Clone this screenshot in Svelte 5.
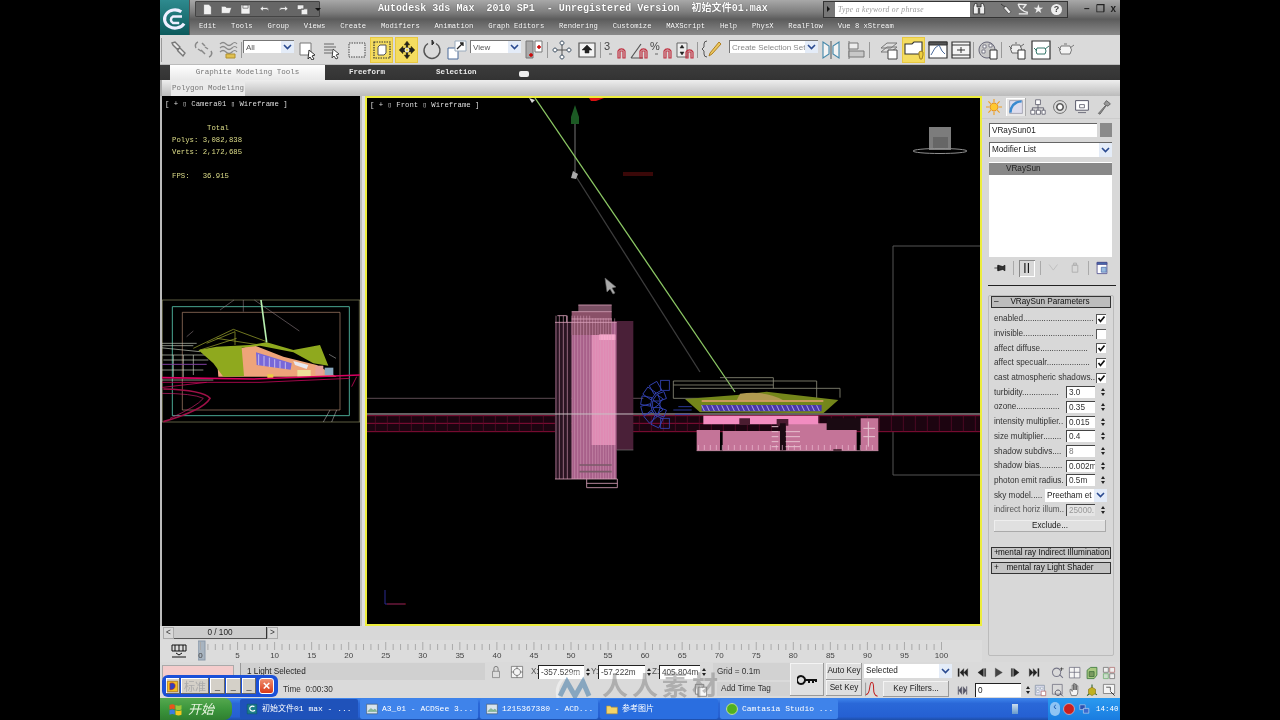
<script>
  const icons = {
    chain: [['M4 3l3-1 5 5-2 3-5-5zM9 9l3-1 5 5-2 3-5-5z', '#777', '#e8e8e8', 1.4]],
    chain2: [['M5 2a4 4 0 0 0-2 6M9 3l3 3M8 10l4 4M16 17a4 4 0 0 0 2-6M5 9l3 2M12 7l3 2', '#888', 'none', 1.5]],
    wave: [['M2 4q3-3 6 0t6 0 5 0M2 8q3-3 6 0t6 0 5 0M2 12q3-3 6 0t6 0 5 0', '#8a8a8a', 'none', 1.2], ['M8 14h9v4H8z', '#b09030', '#e0c050', 1]],
    sel: [['M3 3h11v12H3z', '#777', '#fff', 1], ['M12 10l6 5-3 1 2 3-2 1-2-3-2 2z', '#333', '#fff', 1]],
    selname: [['M2 4h10M2 7h12M2 10h8M2 13h9', '#666', 'none', 1.2], ['M11 9l6 5-3 1 2 3-2 1-2-3-2 2z', '#444', '#fff', 1]],
    region: [['M2 3h16v14H2z', '#444', '#e4e4e4', 1, '1.5 1']],
    win: [['M2 2h16v16H2z', '#333', 'none', 1.2, '1.5 1'], ['M6 7l2-2h6v8l-2 2H6z', '#555', '#fff', 1]],
    move: [['M10 1l3 4h-2v3h3V6l4 4-4 4v-2h-3v3h2l-3 4-3-4h2v-3H6v2l-4-4 4-4v2h3V5H7z', '#6a5a00', '#222', .4], ['M10 8a2 2 0 1 1 0 4 2 2 0 0 1 0-4z', '#fff', '#f4dc48', 1]],
    rot: [['M14 3.500a8 8 0 1 1-8 0', '#555', 'none', 1.4], ['M10 0l2 3-2 2z', '#333', '#333', 1]],
    scale: [['M1 8h10v11H1z', '#4a6a9a', '#fff', 1], ['M8 1h11v10H8z', '#9ab', '#fff', 1], ['M10 9l6-6M13 3h3v3', '#222', 'none', 1.3]],
    pivot: [['M2 1h7v17H2z', '#777', '#aaa', 1], ['M11 1h7v11h-7z', '#777', '#fff', 1], ['M5 15h4M7 13v4M13 7h4M15 5v4', '#c00', 'none', 1.4]],
    manip: [['M10 3v14M3 10h14', '#555', 'none', 1], ['M10 1a2 2 0 1 1-.01 0zM10 15a2 2 0 1 1-.01 0zM3 8a2 2 0 1 1-.01 0zM17 8a2 2 0 1 1-.01 0z', '#456', '#fff', 1]],
    kbd: [['M2 3h16v14H2z', '#555', '#f4f4f4', 1.2], ['M10 5l5 5h-3v3H8v-3H5z', '#222', '#222', .5]],
    snap3: [['M12 11a4 4 0 0 1 7 0v7h-2v-7h-3v7h-2z', '#c03040', 'none', 1.2], ['M3 14h3', '#666', 'none', 1]],
    angle: [['M2 18l10-14M2 18h12', '#555', 'none', 1.2], ['M11 11a4 4 0 0 1 7 0v7h-2v-7h-3v7h-2z', '#c03040', 'none', 1.2]],
    spin: [['M2 3h10v14H2z', '#666', '#eee', 1], ['M7 5l2 3H5zM7 15l2-3H5z', '#222', '#222', .5], ['M11 12a4 4 0 0 1 7 0v6h-2v-6h-3v6h-2z', '#c03040', 'none', 1.2]],
    named: [['M5 1q-3 0-3 3v3l-2 2 2 2v3q0 3 3 3', '#555', 'none', 1], ['M8 13l9-11 2 2-9 10-3 2z', '#b08020', '#ecc860', 1]],
    mirror: [['M2 2v16l6-4V6zM18 2v16l-6-4V6z', '#48a', '#f4f4f4', 1.1], ['M10 1v18', '#555', 'none', 1]],
    align: [['M3 1v18', '#777', 'none', 1], ['M3 3h9v6H3z', '#777', '#eee', 1], ['M3 11h15v6H3z', '#777', '#c8c8c8', 1]],
    layer: [['M2 8l6-5h10l-6 5zM2 12l6-5h10l-6 5z', '#777', '#ddd', 1], ['M9 10h9v9H9z', '#444', '#fff', 1]],
    graph: [['M1 4h7l2-2h8v12H1z', '#333', '#fff', 1.1], ['M15 12a3 3 0 0 1 4 0v3l-1 4h-2l-1-4z', '#a08020', '#f0d040', 1]],
    curve: [['M1 2h18v16H1z', '#333', '#fff', 1.2], ['M1 2h18v3H1z', '#333', '#555', 1], ['M3 15l4-7 4-3 3 6 3 3', '#4a6a9a', 'none', 1]],
    schem: [['M1 2h18v16H1z', '#333', '#f4f4f4', 1.2], ['M1 5h18M1 15h18M6 10h8M10 7v6', '#333', 'none', 1]],
    mat: [['M9 2a8 8 0 1 1-.01 0z', '#667', '#c8c8c8', 1], ['M5 5h3v3H5zM11 4h3v3h-3zM4 10h3v3H4z', '#667', '#fff', .8], ['M12 10h7v9h-7z', '#333', '#fff', 1]],
    teaS: [['M6 5h8q3 4 0 8H6q-3-4 0-8zM3 6l3 3M14 7l4-3M9 3h2', '#666', '#eee', 1], ['M12 10h7v9h-7z', '#333', '#fff', 1]],
    teaB: [['M1 1h18v18H1z', '#333', '#fff', 1.2], ['M6 8h8q2 3 0 6H6q-2-3 0-6zM3 8l3 3M14 9l4-3', '#35776a', 'none', 1]],
    tea: [['M5 6h9q3 4 0 8H5q-3-4 0-8zM2 7l3 3M14 8l4-3M8 4h3', '#777', '#f4f4f4', 1]],
    sun: [['M10 5a5 5 0 1 1-.01 0z', '#e08010', '#ffc830', 1], ['M10 0v4M10 16v4M0 10h4M16 10h4M3 3l3 3M17 3l-3 3M3 17l3-3M17 17l-3-3', '#f0a020', 'none', 1.4]],
    modify: [['M2 2h16v16H2z', '#99a', '#dde', 1], ['M3 17q1-13 14-14', '#3a8ad0', 'none', 3]],
    hier: [['M7 1h6v6H7zM1 14h5v5H1zM8 14h5v5H8zM15 14h4v5h-4z', '#556', '#fff', 1], ['M10 7v4M3 14v-3h14v3M10 11v3', '#556', 'none', 1]],
    motion: [['M10 2a8 8 0 1 1-.01 0z', '#555', '#ddd', 1], ['M10 6a4 4 0 1 1-.01 0z', '#555', '#fff', 2]],
    disp: [['M2 2h16v12H2z', '#556', '#fff', 1.2], ['M7 7h6v4H7zM5 17h10', '#556', 'none', 1]],
    util: [['M3 18l9-10-2-2 3-4 5 4-3 3-2-1-8 11z', '#555', '#999', 1]],
    pin: [['M2 10h5M7 6v8M7 6l7 2 3-2v8l-3-2-7 2z', '#111', '#333', 1]],
    bars: [['M7 3v14M12 3v14', '#111', 'none', 1.6]],
    ghost1: [['M3 5l6 8M15 5l-6 8', '#bbb', 'none', 1.2]],
    ghost2: [['M6 6h8v10H6zM8 3h4v3H8z', '#aaa', 'none', 1.2]],
    conf: [['M3 2h14v16H3z', '#448', '#fff', 1.1], ['M3 2h14v3H3z', '#448', '#46a', 1], ['M9 9h7v7H9z', '#46a', '#9bd', 1]],
    lock: [['M5 9h10v9H5z', '#777', '#ddd', 1], ['M7 9V5a3 3 0 0 1 6 0v4', '#777', 'none', 1.3]],
    abs: [['M2 2h16v16H2z', '#666', '#f4f4f4', 1], ['M10 5a5 5 0 1 1-.01 0zM10 2v3M10 15v3M2 10h3M15 10h3', '#555', 'none', 1]],
    keyb: [['M4 6a4 4 0 1 1-.01 0zM8 10h11v2M12 10v3M16 10v3', '#111', 'none', 2]],
    kcurve: [['M2 17q4 0 5-8t3-7q2 0 2 8t5 9', '#c02020', 'none', 1.3], ['M2 19V2', '#888', 'none', 1]],
    first: [['M3 4v12h2V4zM12 4l-6 6 6 6zM18 4l-6 6 6 6z', '#222', '#222', .4]],
    prev: [['M14 4l-8 6 8 6zM15 4h1v12h-1zM17 4h1v12h-1z', '#222', '#222', .4]],
    play: [['M5 3l11 7-11 7z', '#444', '#444', .4]],
    next: [['M6 4l8 6-8 6zM4 4h1v12H4zM2 4h1v12H2z', '#222', '#222', .4]],
    last: [['M17 4v12h-2V4zM8 4l6 6-6 6zM2 4l6 6-6 6z', '#222', '#222', .4]],
    modek: [['M3 4v12h1V4zM9 4l-5 6 5 6zM17 4v12h-1V4zM11 4l5 6-5 6z', '#556', '#556', .4]],
    time: [['M2 2h14v15H2z', '#789', '#dde', 1], ['M4 5h4v3H4zM10 5h4v3h-4zM4 10h4v3H4z', '#89a', '#fff', .8], ['M11 11h7v7h-7z', '#a55', '#fff', 1]],
    zoom: [['M8 3a6 6 0 1 1-.01 0zM12 12l5 5', '#778', 'none', 1.5], ['M15 2v5M13 4h5', '#333', 'none', 1]],
    zoomall: [['M2 2h15v15H2zM2 9h15M9 2v15', '#667', '#f4f4f4', 1]],
    tag: [['M2 2h12v14H2z', '#666', '#eee', 1], ['M6 6h12v13H6z', '#666', '#f8f8f8', 1]],
    cube: [['M3 6l5-4h9v11l-4 5H3z', '#3a7a3a', '#a8c880', 1.2], ['M6 8h7v7H6z', '#363', '#7a9a60', 1]],
    quad: [['M2 2h7v7H2z', '#666', '#eee', 1], ['M11 2h7v7h-7z', '#a66', '#eee', 1], ['M2 11h7v7H2z', '#6a6', '#cdc', 1], ['M11 11h7v7h-7z', '#666', '#eee', 1]],
    reg: [['M2 2h14v14H2z', '#667', 'none', 1], ['M10 10a4 4 0 1 1-.01 0zM13 15l4 4', '#556', 'none', 1.3]],
    hand: [['M5 18q-3-6-2-9 2-1 3 3V3h2v7V1h2v9V2h2v8V4h2v9q0 3-2 5z', '#555', '#f4f4f4', 1]],
    orbit: [['M10 2v14M10 12L3 18M10 12l7 5', '#286028', 'none', 1.5], ['M10 6l5 3v6l-5 3-5-3V9z', '#8a7a20', '#c0b020', 1]],
    maxi: [['M2 2h16v13H2z', '#666', '#f4f4f4', 1], ['M6 6h6v5', '#444', 'none', 1.2], ['M12 12l6 6', '#333', 'none', 1.4]],
    binoc: [['M2 8l2-6h3v5h6V2h3l2 6v9h-7V9H9v8H2z', '#222', '#eee', 1]],
    wrench: [['M3 3l4 4 3-1 7 8-3 3-7-8 1-3z', '#333', '#eee', 1]],
    dish: [['M3 3q3 10 14 12M3 3l12 1M4 17h13M10 9l5-6', '#eee', 'none', 2]],
    folder: [['M1 5h6l2 2h10v11H1z', '#b89030', '#f4d468', 1]],
    acdsee: [['M1 2h18v16H1z', '#456', '#d8e4ee', 1], ['M3 14l5-5 4 3 3-2 3 4z', '#486', '#8b9', .6]],
    globe: [['M10 1a9 9 0 1 1-.01 0z', '#d8f0a0', '#50b020', 1.4]],
    rball: [['M10 1a9 9 0 1 1-.01 0z', '#f0c0c0', '#c82020', 1.2]],
    net: [['M3 3h9v8H3z', '#cde', '#2a50b0', 1], ['M9 9h9v8H9z', '#cde', '#3a6ad0', 1]],
    imeico: [['M2 2h16v16H2z', '#a06010', '#f0c020', 1], ['M6 5q8-2 8 4t-8 6z', '#c02020', '#3040c0', 1]],
    maxapp: [['M2 2h16v16H2z', '#0e5a66', '#1c7f88', 1], ['M14 6a5 4 0 1 0 1 6', '#fff', 'none', 2]],
    maxlogo: [['M14.500 5.500a7.500 6.500 0 1 0 2 8.500', '#eef', 'none', 2.2], ['M15 9H8.500a2.500 2.500 0 0 0 0 4.500H13', '#eef', 'none', 1.8]]
  };
  const t1 = ['chain','chain2','wave'];
  const t2 = ['sel','selname','region','win','move','rot','scale'];
  const ticks = Array.from({ length: 101 }, (_, i) => i);
  const dots = (n) => '.'.repeat(n);
  const rows = [
    { l: 'enabled' + dots(31), c: 1 },
    { l: 'invisible' + dots(31), c: 0 },
    { l: 'affect diffuse' + dots(21), c: 1 },
    { l: 'affect specualr' + dots(19), c: 1 },
    { l: 'cast atmospheric shadows..', c: 1 },
    { l: 'turbidity' + dots(16), v: '3.0' },
    { l: 'ozone' + dots(19), v: '0.35' },
    { l: 'intensity multiplier..', v: '0.015' },
    { l: 'size multiplier' + dots(8), v: '0.4' },
    { l: 'shadow subdivs....', v: '8', dim: 1 },
    { l: 'shadow bias' + dots(10), v: '0.002m' },
    { l: 'photon emit radius.', v: '0.5m' },
    { l: 'sky model.....', d: 'Preetham et' },
    { l: 'indirect horiz illum..', v: '25000.', off: 1 }
  ];
  const towerL = [48, 58, 70, 82, 96, 104, 113, 122, 131, 140, 149];
  const towerR = [158, 166, 174, 182, 190, 198, 206, 214, 224];
  const bandX = Array.from({ length: 52 }, (_, i) => -530 + i * 36);
  const bldX = Array.from({ length: 30 }, (_, i) => 475 + i * 18);
  const winX = Array.from({ length: 24 }, (_, i) => 485 + i * 15);
  const wheel = [-90, -65, -40, -15, 10, 35, 60, 90];
  const wheelIn = [-70, -35, 0, 35, 70];
</script>

{#snippet icon(name, size = 20)}
  <svg class="ico" width={size} height={size} viewBox="0 0 20 20">
    {#each icons[name] as p}
      <path d={p[0]} stroke={p[1]} fill={p[2]} stroke-width={p[3]} stroke-dasharray={p[4]} />
    {/each}
  </svg>
{/snippet}

{#snippet caret()}
  <span class="caret"><svg width="9" height="6" viewBox="0 0 9 6"><path d="M1 1l3.500 3.500L8 1" fill="none" stroke="#2a4a90" stroke-width="1.6" /></svg></span>
{/snippet}

{#snippet spinner()}
  <span class="spin"><i class="up"></i><i class="dn"></i></span>
{/snippet}

<div class="app">
  <header class="title wide">
    <div class="logo">{@render icon('maxlogo', 28)}</div>
    <div class="titlemain">
      <div class="titletop">
        <div class="qat">
          {#each ['M4 2h8l4 4v12H4z','M2 5h6l2 2h8l-3 9H2z','M3 3h14v14H3zM6 3h8v5H6z','M3 9l5-5v3h5q4 0 4 6-2-3-4-3H8v3z','M17 9l-5-5v3H7q-4 0-4 6 2-3 4-3h5v3z','M2 3h10v7H2zM8 9h10v9H8z'] as d}
            <svg class="qi" width="15" height="15" viewBox="0 0 20 20"><path {d} fill="#f0f0f0" stroke="#555" stroke-width="1" /></svg>
          {/each}
          <span class="tri"></span>
        </div>
        <div class="apptitle">Autodesk 3ds Max&nbsp; 2010 SP1&nbsp; - Unregistered Version&nbsp; 初始文件01.max</div>
        <div class="search">
          <span class="sarrow"></span>
          <span class="sinput">Type a keyword or phrase</span>
          <span class="sicons">
            <span class="binoc">{@render icon('binoc', 14)}</span>{@render icon('wrench', 14)}{@render icon('dish', 14)}
            <span class="star">★</span><span class="help">?</span>
          </span>
        </div>
        <div class="winbtns"><span>–</span><span>❐</span><span>x</span></div>
      </div>
      <nav class="menu">
        {#each ['Edit','Tools','Group','Views','Create','Modifiers','Animation','Graph Editors','Rendering','Customize','MAXScript','Help','PhysX','RealFlow','Vue 8 xStream'] as m}
          <span>{m}</span>
        {/each}
      </nav>
    </div>
  </header>

  <div class="toolbar wide">
    <span class="grip"></span>
    {#each t1 as n}<span class="tb">{@render icon(n)}</span>{/each}
    <span class="sep"></span>
    <span class="combo all">All{@render caret()}</span>
    {#each t2 as n}
      <span class="tb" class:on={n === 'win' || n === 'move'}>{@render icon(n)}</span>
    {/each}
    <span class="combo view">View{@render caret()}</span>
    <span class="tb">{@render icon('pivot')}</span>
    <span class="sep"></span>
    <span class="tb">{@render icon('manip')}</span>
    <span class="tb">{@render icon('kbd')}</span>
    <span class="sep"></span>
    <span class="tb sn nar first3"><b>3</b>{@render icon('snap3')}</span>
    <span class="tb nar">{@render icon('angle')}</span>
    <span class="tb sn nar"><b>%</b>{@render icon('snap3')}</span>
    <span class="tb nar">{@render icon('spin')}</span>
    <span class="sep"></span>
    <span class="tb">{@render icon('named')}</span>
    <span class="combo set">Create Selection Set{@render caret()}</span>
    <span class="tb">{@render icon('mirror')}</span>
    <span class="tb">{@render icon('align')}</span>
    <span class="sep"></span>
    <span class="tb layerb">{@render icon('layer')}</span>
    <span class="tb on gr">{@render icon('graph')}</span>
    <span class="tb nar">{@render icon('curve')}</span>
    <span class="tb nar">{@render icon('schem')}</span>
    <span class="sep"></span>
    <span class="tb">{@render icon('mat')}</span>
    <span class="sep"></span>
    <span class="tb">{@render icon('teaS')}</span>
    <span class="tb">{@render icon('teaB')}</span>
    <span class="tb">{@render icon('tea')}</span>
  </div>

  <div class="tabs wide">
    <span class="tab active">Graphite Modeling Tools</span>
    <span class="tab free">Freeform</span>
    <span class="tab seln">Selection</span>
    <span class="tabmini"></span>
  </div>
  <div class="ribbon wide"><span class="rtab">Polygon Modeling</span></div>

  <main class="work">
    <section class="vp left">
      <div class="vlabel">[ + ▯ Camera01 ▯ Wireframe ]</div>
      <pre class="stats">        Total
Polys: 3,082,838
Verts: 2,172,685

FPS:   36.915</pre>
      <svg class="cam" viewBox="0 0 615 390">
        <path d="M5 15H610M5 381H610M7 15V381M598 15V381" stroke="#8c8c60" stroke-width="2" fill="none" />
        <path d="M37 35H568V362H37z" fill="none" stroke="#58c8b0" stroke-width="2.500" />
        <path d="M67 52H540V345H67z" fill="none" stroke="#b08870" stroke-width="2" />
        <path d="M180 45L222 15M250 15V50M283 15L418 108M80 125L100 108" stroke="#9a8a90" stroke-width="1.600" fill="none" />
        <path d="M0 145H110M0 152H100M0 158L120 170M0 180H150M10 195H145M40 180V250M70 180V250M100 180V240M0 255H160M0 225H130" stroke="#c8d0c0" stroke-width="2" fill="none" />
        <path d="M0 208H140" stroke="#8040a0" stroke-width="3" />
        <path d="M100 160L220 103L320 140M140 145L225 110V150M170 130L300 150M120 165L230 130" stroke="#a8b030" stroke-width="2" fill="none" />
        <path d="M170 178L280 150L370 185L470 210L530 245H175z" fill="#eea47a" />
        <path d="M115 165L170 155L270 150L320 142L400 165L480 150L505 212L460 205L400 172L300 152L245 158L252 243L190 245L160 205z" fill="#8fa91e" />
        <path d="M288 172L395 205L392 224L290 210z" fill="#7868d8" />
        <path d="M296 178V210M312 183V213M328 188V216M344 193V218M360 198V220M376 202V222" stroke="#d8d0f0" stroke-width="2.500" />
        <path d="M400 198L445 210L440 222L405 210z" fill="#e8e8f0" />
        <path d="M412 225H452V245H412z" fill="#ece098" />
        <path d="M322 238H340V250H322z" fill="#e8d040" />
        <path d="M466 212H490V240H466z" fill="#e8a098" />
        <path d="M494 218H520V240H494z" fill="#88a8c0" />
        <path d="M0 248L280 252L600 240" stroke="#d80060" stroke-width="5" fill="none" />
        <path d="M0 262L300 262L570 250M0 278L140 262M575 275L590 245" stroke="#c00858" stroke-width="2.500" fill="none" />
        <path d="M10 282Q130 285 150 310Q130 345 10 380" stroke="#a01048" stroke-width="5" fill="none" />
        <path d="M0 295Q100 295 130 310Q110 335 30 370" stroke="#d02070" stroke-width="2" fill="none" />
        <path d="M303 15L320 142" stroke="#b8f0b0" stroke-width="5" />
        <path d="M490 381L510 345M515 381L530 345M507 178L528 190" stroke="#c8c8c8" stroke-width="1.500" fill="none" />
      </svg>
    </section>

    <section class="vp front">
      <div class="vlabel">[ + ▯ Front ▯ Wireframe ]</div>
      <svg class="scene" viewBox="367 98 613 526">
        <path d="M893 475V246H980M893 475H980" stroke="#555" fill="none" />
        <path d="M589 98h15l-8 3h-5z" fill="#d81010" />
        <path d="M623 172h30v4h-30z" fill="#3a0808" />
        <path d="M575 112V172" stroke="#3a3a3a" stroke-width="2" />
        <path d="M575 105l4 12v7h-8v-7z" fill="#1c5a24" />
        <path d="M535 98L735 392" stroke="#8cc864" stroke-width="1.300" />
        <path d="M575 175L700 372" stroke="#3c3c3c" stroke-width="1.300" />
        <path d="M573 171l5 3-2 5-5-1z" fill="#aaa" />
        <path d="M529 98l6 2-3 3z" fill="#d8d8d8" />
        <path d="M929 127H951V150H929z" fill="#7c7c7c" />
        <path d="M933 137H948V148H933z" fill="#666" />
        <ellipse cx="940" cy="151" rx="27" ry="2.500" fill="none" stroke="#909090" />
        <path d="M605 278l2 14 3-3 3 5 2-1-3-5 4-1z" fill="#aaa" stroke="#666" stroke-width=".6" />
        <path d="M385 590V604H405" stroke="#2a2a90" fill="none" />
        <path d="M387 604H406" stroke="#8a1010" />

        <g transform="translate(540 295) scale(.33333)">
          <path d="M-520 310H310" stroke="#4a3c42" stroke-width="4" />
          <path d="M-520 362H1320V410H-520z" fill="#1c0410" />
          <path d="M-520 362H1320M-520 410H1320M-520 385H700" stroke="#8a0e38" stroke-width="3" />
          {#each bandX as x}<path d="M{x} 362V410" stroke="#640c2c" stroke-width="2" />{/each}
          <path d="M45 82H95V552H45z" fill="#2a1422" />
          <path d="M215 78H280V465H215z" fill="#4a2038" />
          <path d="M95 82H230V552H95z" fill="#a8608a" />
          <path d="M95 50H215V120H95z" fill="#8a5068" />
          <path d="M115 30H215V50H115z" fill="#7a5064" />
          <path d="M155 120H226V450H155z" fill="#e08ab4" />
          <path d="M178 118H226V135H178z" fill="#f8a8cc" />
          {#each towerL as x}<path d="M{x} 62V552" stroke="#c890ac" stroke-width="2" />{/each}
          {#each towerR as x}<path d="M{x} 70V552" stroke="#d8a0bc" stroke-width="1.500" />{/each}
          <path d="M45 82H230M52 62H80V82M95 50H215M115 30H215M95 72H215M140 552V578H232V552M140 565H232M45 552H232" stroke="#d8a0b8" stroke-width="2.500" fill="none" />
          <path d="M118 510H215M118 530H215" stroke="#7a5a68" stroke-width="5" />
          <path d="M230 465H280" stroke="#777" stroke-width="2" />
          <path d="M-520 357H1320" stroke="#c8c0c4" stroke-width="3" />

          <g fill="none" stroke="#3444b8" stroke-width="2.500">
            {#each wheel as a}
              <rect x="303" y="315" width="30" height="26" transform="rotate({a} 375 328)" />
            {/each}
            {#each wheelIn as a}
              <rect x="338" y="318" width="22" height="20" transform="rotate({a} 375 328)" />
            {/each}
            <path d="M400 345H455M415 335H455M405 358H450" />
          </g>

          <path d="M400 258H830V310H400zM420 280H900V308M400 270H700M540 248H700V280" fill="none" stroke="#8a8a78" stroke-width="2.500" />
          <path d="M435 312L620 298L680 290L895 315L850 355L480 352z" fill="#74861a" />
          <path d="M600 296q80-10 130 20H590z" fill="#b09a50" />
          <path d="M485 318H850" stroke="#e8a070" stroke-width="5" />
          <path d="M485 330H845V349H485z" fill="#4a38a8" />
          {#each winX as x}<path d="M{x} 331l8 17" stroke="#b0a0f0" stroke-width="3" />{/each}

          <path d="M470 405H540V467H470zM548 408H720V467H548zM737 385H950V467H737zM962 370H1015V467H962z" fill="#c47498" />
          <path d="M490 362H835V388H490z" fill="#f28cc0" />
          <path d="M598 370H630V390H598zM710 372H745V392H710z" fill="#4a1c30" />
          <path d="M720 385H737V467H720zM860 370H960V405H860z" fill="#1a0a12" />
          {#each bldX as x}<path d="M{x} 450V465" stroke="#eec0d4" stroke-width="2" />{/each}
          <path d="M695 395H715M695 410H715M695 425H715M695 440H715M695 455H715M737 410H780M737 425H780M737 440H780M737 455H780" stroke="#e8c0d0" stroke-width="3" />
          <path d="M985 380V455M970 400H1005M970 425H1005" stroke="#e8c8d4" stroke-width="3" />
          <path d="M470 467H1015" stroke="#d8a0b8" stroke-width="2" />
          <path d="M880 465H905" stroke="#200810" stroke-width="4" />
        </g>
      </svg>
    </section>
  </main>

  <aside class="cmd">
    <div class="cmdtabs">
      <span class="ct">{@render icon('sun', 16)}</span>
      <span class="ct on">{@render icon('modify', 16)}</span>
      <span class="ct">{@render icon('hier', 16)}</span>
      <span class="ct">{@render icon('motion', 16)}</span>
      <span class="ct">{@render icon('disp', 16)}</span>
      <span class="ct">{@render icon('util', 16)}</span>
    </div>
    <div class="namerow"><span class="name">VRaySun01</span><span class="swatch"></span></div>
    <div class="modlist">Modifier List{@render caret()}</div>
    <div class="stack"><div class="stacksel">VRaySun</div></div>
    <div class="stacktools">
      <span>{@render icon('pin', 14)}</span><i></i>
      <span class="pressed">{@render icon('bars', 14)}</span><i></i>
      <span>{@render icon('ghost1', 14)}</span><span>{@render icon('ghost2', 14)}</span><i></i>
      <span>{@render icon('conf', 14)}</span>
    </div>
    <div class="rule"></div>
    <div class="rollouts">
      <div class="rollhead"><b>–</b><span>VRaySun Parameters</span></div>
      <div class="params">
        {#each rows as r}
          <div class="prow">
            <span class="plabel" class:dim={r.off}>{r.l}</span>
            {#if r.c !== undefined}
              <span class="check">{#if r.c}<svg width="9" height="9" viewBox="0 0 9 9"><path d="M1.500 4l2 2.500L7.500 1.500" fill="none" stroke="#111" stroke-width="1.700" /></svg>{/if}</span>
            {:else if r.v}
              <span class="num" class:off={r.off} class:dim={r.dim}>{r.v}</span>{@render spinner()}
            {:else}
              <span class="pcombo">{r.d}{@render caret()}</span>
            {/if}
          </div>
        {/each}
        <div class="exclude">Exclude...</div>
      </div>
      <div class="rollhead closed"><b>+</b><span class="first">mental ray Indirect Illumination</span></div>
      <div class="rollhead closed"><b>+</b><span>mental ray Light Shader</span></div>
    </div>
  </aside>

  <div class="slider">
    <span class="sbtn">&lt;</span>
    <span class="sthumb">0 / 100</span>
    <span class="sbtn">&gt;</span>
  </div>

  <div class="track">
    <span class="ticon"><svg width="16" height="14" viewBox="0 0 16 14"><path d="M1 1h14v6H1zM4 1v6M8 1v6M12 1v6M1 13h14" stroke="#111" fill="none" /><path d="M5 9l3 2 3-2" stroke="#111" fill="none" /></svg></span>
    <svg class="ruler" viewBox="198 640 784 22">
      <rect x="198" y="641" width="7" height="19" fill="#a8b4c0" stroke="#8a98a8" />
      {#each ticks as i}
        <path d="M{200.500 + i * 7.41} {i % 5 ? 644 : 642}V650" stroke="#aaa" />
        {#if i % 5 === 0}
          <text x={200.500 + i * 7.41} y="658" class="rtext">{i}</text>
        {/if}
      {/each}
    </svg>
  </div>

  <div class="lower wide">
    <div class="colA">
      <div class="rowA">
        <span class="pink"></span>
        <span class="statusbox">1 Light Selected</span>
        <span class="lk">{@render icon('lock', 14)}</span>
        <span class="lk">{@render icon('abs', 14)}</span>
        <span class="axis ax">X:</span><span class="coord x">-357.529m</span>{@render spinner()}
        <span class="axis">Y:</span><span class="coord y">-57.222m</span>{@render spinner()}
        <span class="axis">Z:</span><span class="coord z">405.804m</span>{@render spinner()}
      </div>
      <div class="rowB">
        <span class="time">Time&nbsp; 0:00:30</span>
        <span class="tagicon">{@render icon('tag', 14)}</span>
      </div>
    </div>
    <div class="colB">
      <span class="inset">Grid = 0.1m</span>
      <span class="inset tag">Add Time Tag</span>
    </div>
    <div class="keybtn">{@render icon('keyb', 20)}</div>
    <div class="colD"><span class="btn">Auto Key</span><span class="btn">Set Key</span></div>
    <div class="colE">
      <span class="selcombo">Selected{@render caret()}</span>
      <div class="ecurve">{@render icon('kcurve', 16)}<span class="btn kf">Key Filters...</span></div>
    </div>
    <div class="colF">
      <div class="play">
        {@render icon('first', 13)}{@render icon('prev', 13)}{@render icon('play', 13)}{@render icon('next', 13)}{@render icon('last', 13)}
      </div>
      <div class="frame">
        {@render icon('modek', 13)}<span class="finput">0</span>{@render spinner()}{@render icon('time', 13)}
      </div>
    </div>
    <div class="colG">
      {#each ['zoom','zoomall','cube','quad','reg','hand','orbit','maxi'] as n}{@render icon(n, 14)}{/each}
    </div>
  </div>

  <footer class="taskbar wide">
    <span class="start">
      <svg width="15" height="15" viewBox="0 0 20 20"><path d="M2 4q4-2 7 0v6q-3-2-7 0z" fill="#e8541c" /><path d="M10 4q4 2 8 0v6q-4 2-8 0z" fill="#9ac83c" /><path d="M2 11q4-2 7 0v6q-3-2-7 0z" fill="#3c7ce0" /><path d="M10 11q4 2 8 0v6q-4 2-8 0z" fill="#f4c81c" /></svg>
      <em>开始</em>
    </span>
    <span class="task cur">{@render icon('maxapp', 12)}初始文件01 max - ...</span>
    <span class="task">{@render icon('acdsee', 12)}A3_01 - ACDSee 3...</span>
    <span class="task">{@render icon('acdsee', 12)}1215367380 - ACD...</span>
    <span class="task mid">{@render icon('folder', 12)}参考图片</span>
    <span class="task">{@render icon('globe', 12)}Camtasia Studio ...</span>
    <span class="tasksp"><i class="netup"></i></span>
    <span class="tray">
      <span class="tchev">‹</span>
      {@render icon('rball', 12)}{@render icon('net', 12)}
      <span class="clock">14:40</span>
    </span>
  </footer>

  <div class="ime">
    <span class="imecell logoc">{@render icon('imeico', 13)}</span>
    <span class="imecell w">标准</span>
    <span class="imecell n">_</span><span class="imecell n">_</span><span class="imecell n">_</span>
    <span class="imeclose">×</span>
  </div>

  <div class="watermark">
    <svg width="50" height="28" viewBox="0 0 50 28"><path d="M30 3a20 20 0 0 0-22 25" fill="none" stroke="#fff" stroke-opacity=".45" stroke-width="3" /><path d="M10 26l7-14 8 14 8-14 6 14" fill="none" stroke="#5a8ab0" stroke-opacity=".65" stroke-width="5" /></svg>
    <span>人人素材</span>
  </div>
</div>

<style>
  :global(body) { margin: 0; background: #000; }
  .app {
    position: relative;
    width: 960px;
    height: 720px;
    margin-left: 160px;
    overflow: hidden;
    display: grid;
    grid-template-columns: 822px 138px;
    grid-template-rows: 35px 30px 15px 16px 530px 14px 22px 36px 22px;
    background: #d8d8d8;
    font-family: "Liberation Sans", sans-serif;
    font-size: 8.2px;
    color: #222;
    filter: blur(.45px);
  }
  .wide { grid-column: 1 / -1; }
  .ico { display: block; flex: none; }
  .title { display: flex; background: linear-gradient(#a8a8a8 0, #7e7e7e 35%, #5c5c5c 55%, #8a8a8a 100%); color: #fff; }
  .logo { width: 30px; display: flex; align-items: center; justify-content: center; background: linear-gradient(#2e8a8e, #0c5a5c); border-right: 1px solid #555; box-sizing: border-box; flex: none; }
  .titlemain { flex: 1; display: flex; flex-direction: column; min-width: 0; }
  .titletop { height: 18px; display: flex; align-items: center; }
  .qat { width: 125px; height: 16px; margin-left: 5px; display: flex; align-items: center; gap: 6px; padding-left: 5px; box-sizing: border-box; background: #666; border: 1px solid #444; border-radius: 1px; flex: none; }
  .qi { flex: none; width: 13px; height: 13px; }
  .tri { width: 0; height: 0; border: 3px solid transparent; border-top-color: #111; margin-top: 3px; }
  .apptitle { margin-left: 58px; font: bold 10.050px/18px "Liberation Mono", "Noto Sans CJK SC", monospace; white-space: nowrap; width: 445px; flex: none; overflow: hidden; text-shadow: 0 0 1px #333; }
  .search { width: 245px; height: 17px; display: flex; align-items: center; background: #777; border: 1px solid #333; box-sizing: border-box; flex: none; }
  .sarrow { width: 0; height: 0; border: 3px solid transparent; border-left-color: #111; margin: 0 1px 0 3px; flex: none; }
  .sinput { width: 135px; height: 15px; margin-left: 1px; background: #fff; color: #999; font: italic 7.500px/15px "Liberation Serif", serif; padding-left: 3px; box-sizing: border-box; letter-spacing: .35px; flex: none; white-space: nowrap; overflow: hidden; }
  .sicons { display: flex; gap: 3px; align-items: center; padding-left: 2px; }
  .binoc { margin-right: 10px; }
  .star { color: #eee; font-size: 12px; line-height: 12px; }
  .help { width: 11px; height: 11px; margin-left: 4px; border-radius: 50%; background: #eee; color: #444; font: bold 9px/11px "Liberation Sans", sans-serif; text-align: center; }
  .winbtns { margin-left: 16px; display: flex; gap: 6px; font: bold 10px/18px "Liberation Sans", sans-serif; color: #222; }
  .menu { height: 17px; display: flex; gap: 14.800px; padding-left: 9px; font: 7.200px/17px "Liberation Mono", monospace; color: #fff; white-space: nowrap; text-shadow: 0 0 1px #444; }
  .toolbar { display: flex; align-items: center; background: #dadada; padding-left: 1px; box-sizing: border-box; border-bottom: 1px solid #bbb; }
  .grip { width: 1px; height: 24px; border-left: 1px solid #999; margin-right: 2px; flex: none; }
  .tb { width: 25px; height: 26px; display: flex; align-items: center; justify-content: center; flex: none; position: relative; }
  .tb.nar { width: 23px; }
  .tb.first3 { margin-left: 2px; }
  .tb.on { background: #f4dc60; box-shadow: inset 0 0 0 1px #e8c840; width: 23px; margin: 0 1px; }
  .tb.layerb { margin-left: 5px; }
  .tb.on.gr { margin-left: 1px; }
  .sn b { position: absolute; left: 0; top: 3px; font: 11px "Liberation Sans", sans-serif; color: #444; }
  .sep { width: 1px; height: 16px; background: #999; margin: 0 1px; flex: none; }
  .combo { height: 13px; background: #fff; color: #555; font-size: 8px; line-height: 13px; padding-left: 2px; box-sizing: border-box; position: relative; flex: none; align-self: flex-start; margin-top: 5px; border-top: 1px solid #777; border-left: 1px solid #777; white-space: nowrap; overflow: hidden; }
  .all { width: 51px; }
  .view { width: 51px; margin-left: 1px; }
  .set { width: 89px; color: #888; margin-left: 5px; }
  .caret { position: absolute; right: 0; top: 0; bottom: 0; width: 13px; background: #e4ecf8; display: flex; align-items: center; justify-content: center; }
  .tabs { background: linear-gradient(#3c3c3c, #333); display: flex; align-items: flex-end; font: 7.500px/15px "Liberation Mono", monospace; color: #e8e8e8; padding-left: 10px; white-space: nowrap; }
  .tab { height: 15px; }
  .active { width: 155px; background: linear-gradient(#fff, #e8e8e8); color: #777; text-align: center; }
  .free { margin-left: 24px; width: 62px; font-weight: bold; }
  .seln { margin-left: 25px; width: 62px; font-weight: bold; }
  .tabmini { width: 10px; height: 6px; border-radius: 2px; background: #eee; margin: 0 0 3px 21px; }
  .ribbon { background: linear-gradient(#eee, #bbb); display: flex; padding-left: 10px; border-left: 2px solid #aaa; box-sizing: border-box; }
  .rtab { background: #eaeaea; color: #777; font: 7.500px/16px "Liberation Mono", monospace; padding: 0 1px; margin-left: -1px; }
  .work { grid-column: 1; display: grid; grid-template-columns: 202px 3px 617px; background: #ddd; overflow: hidden; height: 530px; }
  .vp { background: #000; position: relative; overflow: hidden; }
  .left { border-left: 2px solid #bbb; border-right: 2px solid #bbb; grid-column: 1; }
  .front { grid-column: 3; border: 2px solid #eded3c; box-sizing: border-box; }
  .vlabel { position: absolute; left: 3px; top: 3px; font: 7.300px/10px "Liberation Mono", "DejaVu Sans Mono", monospace; color: #ddd; white-space: pre; z-index: 1; }
  .front .vlabel { left: 3px; top: 2px; }
  .stats { position: absolute; left: 10px; top: 26px; margin: 0; font: 7.300px/12px "Liberation Mono", monospace; color: #dcdc88; }
  .cam { position: absolute; left: -2px; top: 199px; width: 205px; height: 130px; }
  .scene { position: absolute; left: 0; top: 0; width: 613px; height: 526px; }
  .cmd { grid-column: 2; grid-row: 5 / span 3; overflow: hidden; }
  .cmdtabs { height: 20px; display: flex; padding: 2px 0 0 2px; gap: 3px; border-bottom: 1px solid #ccc; }
  .ct { width: 19px; height: 18px; display: flex; align-items: center; justify-content: center; }
  .ct.on { background: #e8e8e8; box-shadow: inset 1px 1px 0 #fff, 1px 0 0 #aaa; }
  .namerow { display: flex; margin: 4px 0 0 7px; gap: 3px; }
  .name { width: 108px; height: 14px; background: #fff; border-top: 1px solid #666; border-left: 1px solid #666; box-sizing: border-box; line-height: 13px; padding-left: 2px; }
  .swatch { width: 12px; height: 14px; background: #8a8a8a; }
  .modlist { margin: 5px 0 0 7px; width: 123px; height: 15px; background: #fff; line-height: 14px; padding-left: 2px; box-sizing: border-box; position: relative; border-top: 1px solid #666; border-left: 1px solid #666; }
  .stack { margin: 5px 0 0 7px; width: 123px; height: 95px; background: #fff; padding-top: 1px; box-sizing: border-box; }
  .stacksel { height: 12px; background: #888; line-height: 12px; padding-left: 17px; color: #222; }
  .stacktools { margin: 1px 0 0 8px; height: 20px; display: flex; align-items: center; gap: 5px; padding-left: 2px; }
  .stacktools span { width: 16px; height: 17px; display: flex; align-items: center; justify-content: center; }
  .stacktools i { width: 1px; height: 14px; background: #aaa; }
  .pressed { box-shadow: inset 1px 1px 0 #888, inset -1px -1px 0 #fff; }
  .rule { height: 1px; background: #222; margin: 7px 4px 0 6px; }
  .rollouts { margin: 9px 6px 0 6px; padding: 0 2px; border: 1px solid #bbb; height: 361px; box-sizing: border-box; border-radius: 2px; }
  .rollhead { height: 12px; margin-top: 0; background: #bdbdbd; border: 1px solid #333; box-sizing: border-box; display: flex; line-height: 10px; color: #111; white-space: nowrap; }
  .rollhead b { width: 10px; padding-left: 2px; flex: none; font-weight: normal; box-sizing: border-box; }
  .rollhead span { flex: 1; text-align: center; padding-right: 12px; }
  .closed { margin-top: 3px; background: #c4c4c4; }
  .closed .first { padding: 0; margin-left: -5px; }
  .params { padding: 3px 5px 0 3px; height: 236px; box-sizing: border-box; display: flex; flex-direction: column; }
  .prow { height: 14.700px; display: flex; align-items: center; white-space: nowrap; flex: none; padding-top: 1px; box-sizing: border-box; }
  .plabel { flex: 1; overflow: hidden; min-width: 0; color: #333; }
  .dim { color: #555; }
  .check { width: 9px; height: 9px; background: #fff; border-top: 1px solid #555; border-left: 1px solid #555; display: flex; align-items: center; justify-content: center; flex: none; }
  .num { width: 29px; height: 12px; background: #fff; border-top: 1px solid #444; border-left: 1px solid #444; box-sizing: border-box; line-height: 11px; padding-left: 2px; flex: none; overflow: hidden; color: #333; margin-right: 4px; }
  .num.off { background: #e4e4e4; color: #999; }
  .num.dim { color: #777; }
  .spin { width: 7px; height: 12px; display: inline-flex; flex-direction: column; align-items: center; justify-content: center; gap: 2px; flex: none; }
  .up { width: 0; height: 0; border: 2px solid transparent; border-top: 0; border-bottom: 3px solid #222; }
  .dn { width: 0; height: 0; border: 2px solid transparent; border-bottom: 0; border-top: 3px solid #222; }
  .pcombo { width: 62px; height: 13px; background: #fff; line-height: 13px; padding-left: 2px; box-sizing: border-box; position: relative; flex: none; margin-right: -1px; }
  .exclude { height: 12px; margin-top: 3px; text-align: center; line-height: 11px; background: #e0e0e0; box-shadow: inset -1px -1px 0 #aaa, inset 1px 1px 0 #eee; flex: none; }
  .slider { grid-column: 1; display: flex; align-items: center; padding-left: 3px; background: #d8d8d8; }
  .sbtn { width: 11px; height: 12px; border: 1px solid #aaa; box-sizing: border-box; line-height: 10px; text-align: center; color: #333; }
  .sthumb { width: 92px; height: 11px; background: #ccc; border-right: 1px solid #333; border-bottom: 1px solid #555; line-height: 11px; text-align: center; }
  .track { grid-column: 1; display: flex; background: #dcdcdc; }
  .ticon { width: 38px; display: flex; justify-content: center; align-items: center; flex: none; }
  .ruler { width: 784px; height: 22px; display: block; flex: none; }
  .rtext { font: 8px "Liberation Sans", sans-serif; fill: #444; text-anchor: middle; }
  .lower { display: flex; background: #dadada; position: relative; }
  .colA { width: 550px; flex: none; display: flex; flex-direction: column; }
  .rowA { display: flex; align-items: center; height: 19px; padding-left: 2px; }
  .pink { width: 72px; height: 14px; background: #f4cccc; border: 1px solid #aaa; box-sizing: border-box; flex: none; }
  .statusbox { width: 245px; height: 17px; margin-left: 6px; background: #d0d0d0; line-height: 17px; padding-left: 6px; box-sizing: border-box; border-left: 1px solid #999; flex: none; }
  .lk { width: 21px; display: flex; justify-content: center; flex: none; }
  .axis { width: 7px; color: #555; flex: none; }
  .ax { margin-left: 4px; }
  .coord { height: 14px; width: 46px; background: #fff; border-top: 1px solid #222; border-left: 1px solid #222; box-sizing: border-box; line-height: 13px; padding-left: 2px; color: #444; flex: none; overflow: hidden; white-space: nowrap; }
  .coord.y { width: 47px; }
  .coord.z { width: 41px; }
  .rowB { display: flex; align-items: center; justify-content: space-between; height: 17px; padding: 0 2px 0 123px; }
  .time { color: #333; }
  .colB { width: 80px; flex: none; display: flex; flex-direction: column; gap: 2px; padding: 1px 0 0 3px; box-sizing: border-box; }
  .inset { height: 17px; background: #d2d2d2; line-height: 17px; padding-left: 4px; box-sizing: border-box; color: #333; }
  .tag { height: 14px; line-height: 14px; margin-left: 4px; }
  .keybtn { width: 34px; height: 33px; margin-top: 1px; display: flex; align-items: center; justify-content: center; background: #e0e0e0; box-shadow: inset -1px -1px 0 #999, inset 1px 1px 0 #f4f4f4; flex: none; }
  .colD { width: 36px; margin-left: 2px; flex: none; display: flex; flex-direction: column; }
  .btn { height: 16px; background: #dedede; box-shadow: inset -1px -1px 0 #999, inset 1px 1px 0 #f4f4f4; line-height: 16px; text-align: center; flex: none; white-space: nowrap; }
  .colD .btn:first-child { height: 17px; margin-top: 1px; }
  .colE { width: 88px; margin-left: 2px; flex: none; display: flex; flex-direction: column; gap: 3px; padding-top: 2px; }
  .selcombo { height: 14px; background: #fff; position: relative; line-height: 14px; padding-left: 2px; box-sizing: border-box; }
  .ecurve { display: flex; gap: 3px; }
  .kf { width: 66px; }
  .colF { width: 92px; margin-left: 4px; flex: none; display: flex; flex-direction: column; }
  .play { height: 18px; display: flex; align-items: center; gap: 5px; padding: 3px 0 0 0; }
  .frame { display: flex; align-items: center; height: 18px; gap: 3px; padding-top: 2px; }
  .finput { width: 46px; height: 14px; margin-left: 3px; background: #fff; border-top: 1px solid #222; border-left: 1px solid #222; box-sizing: border-box; line-height: 13px; padding-left: 2px; }
  .colG { flex: 1; display: grid; grid-template-columns: repeat(4, 17px); align-content: space-around; padding: 2px 0 0 1px; justify-items: center; }
  .taskbar { display: flex; align-items: center; background: linear-gradient(#3f86ec, #2a68d8 25%, #2560d2 85%, #1d4ea8); color: #fff; font: 8px/22px "Liberation Mono", "Noto Sans CJK SC", monospace; white-space: nowrap; }
  .start { width: 72px; height: 22px; display: flex; align-items: center; gap: 5px; padding-left: 8px; box-sizing: border-box; background: linear-gradient(#55a84f, #3c963c 50%, #2f7f30); border-radius: 0 8px 8px 0; flex: none; margin-right: 8px; }
  .start em { font: italic 13px/22px "Noto Sans CJK SC", sans-serif; color: #e8f4e0; }
  .task { width: 118px; height: 20px; margin-right: 2px; display: flex; align-items: center; gap: 4px; padding-left: 6px; box-sizing: border-box; background: #3f83ea; border-radius: 2px; flex: none; overflow: hidden; }
  .task.cur { background: #1f52ba; }
  .task.mid { background: #2a6ee0; }
  .tasksp { flex: 1; display: flex; justify-content: flex-end; padding-right: 30px; }
  .netup { width: 6px; height: 10px; background: linear-gradient(#cde, #69c); display: block; }
  .tray { width: 72px; height: 22px; display: flex; align-items: center; gap: 3px; padding-left: 2px; box-sizing: border-box; background: linear-gradient(#2a9af0, #1a7ce0); flex: none; }
  .tchev { width: 10px; height: 14px; border-radius: 7px; background: #8fc4f4; color: #1c5ab0; text-align: center; line-height: 12px; font-size: 10px; flex: none; }
  .clock { margin-left: 3px; font-size: 7.500px; }
  .ime { position: absolute; left: 2px; top: 675px; width: 116px; height: 22px; box-sizing: border-box; padding: 3px 4px; border-radius: 6px; background: #1b50d8; display: flex; gap: 1px; align-items: stretch; }
  .imecell { background: #d4d0c8; box-shadow: inset -1px -1px 0 #666, inset 1px 1px 0 #fff; display: flex; align-items: center; justify-content: center; color: #333; width: 15px; font-size: 9px; }
  .logoc { width: 14px; }
  .w { width: 29px; color: #aaa; font: 11px "Noto Sans CJK SC", sans-serif; }
  .imeclose { width: 15px; margin-left: 2px; background: linear-gradient(#f09070, #d83818); color: #fff; border: 1px solid #fff; box-sizing: border-box; border-radius: 3px; text-align: center; font: bold 13px/13px "Liberation Sans", sans-serif; }
  .watermark { position: absolute; left: 390px; top: 670px; height: 28px; display: flex; align-items: center; pointer-events: none; }
  .watermark span { font: bold 26px/28px "Noto Sans CJK SC", sans-serif; color: rgba(130,130,130,.5); white-space: nowrap; letter-spacing: 4px; margin-left: 2px; }
</style>
